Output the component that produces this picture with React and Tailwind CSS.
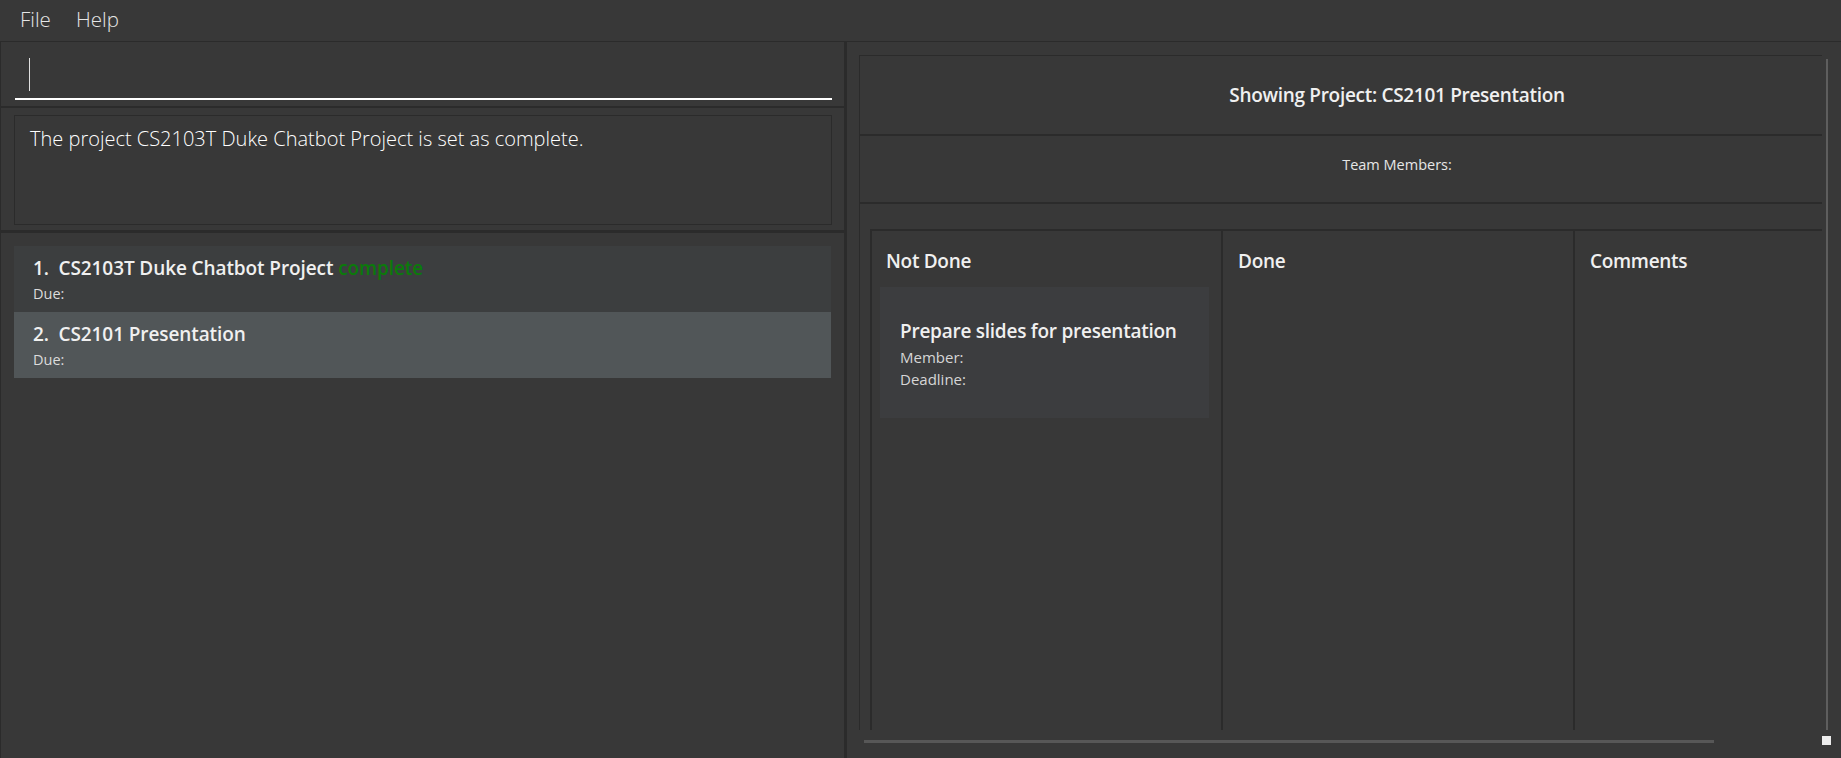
import React from "react";

const projects = [
  { id: 1, name: "CS2103T Duke Chatbot Project", done: true, bg: "bg-[#3c3e3f]" },
  { id: 2, name: "CS2101 Presentation", done: false, bg: "bg-[#515658]" },
];

const MenuBar = () => (
  <div className="h-[42px] shrink-0 border-b border-[#2b2b2b] flex items-center pl-[20px] pb-[3px] text-[20.5px] font-light text-[#e6e6e6]">
    <span className="w-[56px]">File</span>
    <span>Help</span>
  </div>
);

const LeftPane = () => (
  <div className="w-[844px] shrink-0 border-l border-[#2b2b2b] flex flex-col">
    {/* Command box */}
    <div className="h-[66px] border-b-2 border-[#2b2b2b] pl-[14px] pr-[12px] pt-[8px]">
      <div className="h-[50px] border-b-2 border-white flex items-center pl-[14px]">
        <span className="w-px h-[33px] bg-[#e0e0e0]"></span>
      </div>
    </div>

    {/* Result display */}
    <div className="h-[125px] border-b-[3px] border-[#2b2b2b] pl-[13px] pr-[12px] pt-[7px]">
      <div className="h-[110px] border border-[#2b2b2b] pl-[15px] pt-[10px]">
        <p className="text-[20px] leading-[26px] font-light text-white">
          The project CS2103T Duke Chatbot Project is set as complete.
        </p>
      </div>
    </div>

    {/* Project list */}
    <div className="flex-1 pt-[13px] px-[13px]">
      {projects.map((p) => (
        <div key={p.id} className={`${p.bg} h-[66px] pl-[19px] pt-[10px]`}>
          <p className="text-[19px] leading-[24px] font-semibold tracking-[-0.1px] text-[#f0f0f0] whitespace-pre">
            {p.id}.  {p.name}
            {p.done && <span className="text-[#0b7a0b]"> complete</span>}
          </p>
          <p className="mt-[5px] text-[14.5px] leading-[18px] text-[#dcdcdc]">Due:</p>
        </div>
      ))}
    </div>
  </div>
);

const Column = ({ title, first, children }) => (
  <div
    className={`${first ? "w-[351px] pl-[8px]" : "w-[352px] pl-[15px]"} shrink-0 border-l-2 border-t-2 border-[#2b2b2b] pt-[17px]`}
  >
    <p
      className={`${first ? "pl-[6px]" : ""} text-[19px] leading-[26px] font-semibold tracking-[-0.3px] text-[#f0f0f0]`}
    >
      {title}
    </p>
    {children}
  </div>
);

const RightPane = () => (
  <div className="flex-1 flex flex-col pl-[12px] pt-[13px]">
    <div className="flex h-[675px]">
      {/* Viewport */}
      <div className="w-[963px] border-l border-t border-[#2b2b2b] overflow-hidden">
        <div className="w-[1074px]">
          <div className="h-[80px] border-b-2 border-[#2b2b2b] flex items-center justify-center">
            <p className="text-[19px] leading-[26px] font-semibold tracking-[-0.3px] text-[#f0f0f0]">
              Showing Project: CS2101 Presentation
            </p>
          </div>
          <div className="h-[68px] border-b-2 border-[#2b2b2b] pt-[20px] text-center">
            <p className="text-[14.5px] leading-[18px] text-[#e6e6e6]">Team Members:</p>
          </div>
          <div className="h-[25px]"></div>
          <div className="flex h-[501px] pl-[10px]">
            <Column title="Not Done" first>
              <div className="mt-[13px] w-[329px] h-[131px] bg-[#3c3d3f] pl-[20px] pt-[31px]">
                <p className="text-[19px] leading-[26px] font-semibold tracking-[-0.25px] text-[#f0f0f0]">
                  Prepare slides for presentation
                </p>
                <p className="mt-[2px] text-[15px] leading-[22px] text-[#d6d6d6]">Member:</p>
                <p className="text-[15px] leading-[22px] text-[#d6d6d6]">Deadline:</p>
              </div>
            </Column>
            <Column title="Done" />
            <Column title="Comments" />
          </div>
        </div>
      </div>
      {/* Vertical scrollbar */}
      <div className="w-[19px] pl-[4px] pt-[4px]">
        <div className="w-[2px] h-full bg-[#5e5e5e]"></div>
      </div>
    </div>
    {/* Horizontal scrollbar */}
    <div className="flex h-[28px]">
      <div className="ml-[5px] mt-[10px] w-[850px] h-[3px] bg-[#575757]"></div>
      <div className="ml-[108px] mt-[6px] w-[9px] h-[9px] bg-[#ececec]"></div>
    </div>
  </div>
);

export default function App() {
  return (
    <div className="w-[1841px] h-[758px] bg-[#383838] font-['Open_Sans','Noto_Sans',sans-serif] flex flex-col overflow-hidden">
      <MenuBar />
      <div className="flex flex-1 min-h-0">
        <LeftPane />
        <div className="w-[3px] shrink-0 bg-[#2b2b2b]"></div>
        <RightPane />
      </div>
    </div>
  );
}
